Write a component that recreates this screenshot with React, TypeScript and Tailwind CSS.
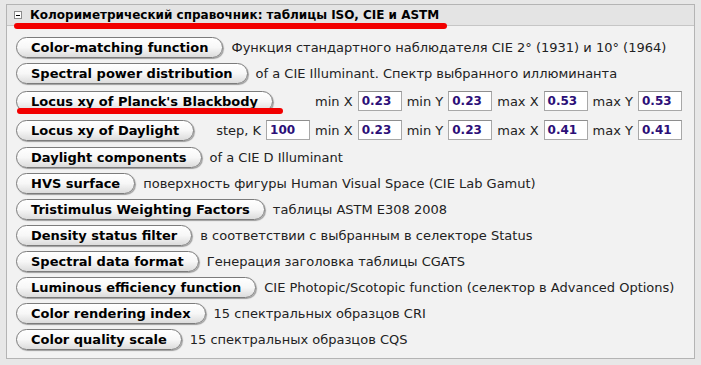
import React from "react";

type Row = {
  label: string;
  desc?: string;
  params?: { label: string; value: string }[];
};

const rows: Row[] = [
  { label: "Color-matching function", desc: "Функция стандартного наблюдателя CIE 2° (1931) и 10° (1964)" },
  { label: "Spectral power distribution", desc: "of a CIE Illuminant. Спектр выбранного иллюминанта" },
  {
    label: "Locus xy of Planck's Blackbody",
    params: [
      { label: "min X", value: "0.23" },
      { label: "min Y", value: "0.23" },
      { label: "max X", value: "0.53" },
      { label: "max Y", value: "0.53" },
    ],
  },
  {
    label: "Locus xy of Daylight",
    params: [
      { label: "step, K", value: "100" },
      { label: "min X", value: "0.23" },
      { label: "min Y", value: "0.23" },
      { label: "max X", value: "0.41" },
      { label: "max Y", value: "0.41" },
    ],
  },
  { label: "Daylight components", desc: "of a CIE D Illuminant" },
  { label: "HVS surface", desc: "поверхность фигуры Human Visual Space (CIE Lab Gamut)" },
  { label: "Tristimulus Weighting Factors", desc: "таблицы ASTM E308 2008" },
  { label: "Density status filter", desc: "в соответствии с выбранным в селекторе Status" },
  { label: "Spectral data format", desc: "Генерация заголовка таблицы CGATS" },
  { label: "Luminous efficiency function", desc: "CIE Photopic/Scotopic function (селектор в Advanced Options)" },
  { label: "Color rendering index", desc: "15 спектральных образцов CRI" },
  { label: "Color quality scale", desc: "15 спектральных образцов CQS" },
];

function Btn({ children }: { children: React.ReactNode }) {
  return (
    <button
      type="button"
      className="h-[21px] shrink-0 rounded-full border border-[#7c7c7c] bg-gradient-to-b from-[#ffffff] via-[#f7f7f7] to-[#dcdcdc] px-[14px] text-[13px] font-bold leading-none text-black shadow-[1px_1px_1px_rgba(0,0,0,0.35)]"
    >
      {children}
    </button>
  );
}

export default function App() {
  return (
    <div className="relative h-[365px] w-[701px] overflow-hidden bg-[#e7e7e7] pl-[6px] pt-[4px] font-['DejaVu_Sans',_Verdana,_sans-serif] text-[#222]">
      <div className="flex w-[689px] flex-col border border-[#b4b4b4] bg-[#f2f2f2]">
        <div className="flex h-[21px] items-center gap-[8px] border-b border-[#c6c6c6] bg-[#e4e4e4] pl-[7px]">
          <span className="flex h-[8px] w-[8px] items-center justify-center border border-[#8c8c8c] bg-white">
            <span className="h-[1px] w-[4px] bg-black" />
          </span>
          <span className="text-[12px] font-bold leading-none text-black">
            Колориметрический справочник: таблицы ISO, CIE и ASTM
          </span>
        </div>
        <div className="flex flex-col gap-[5px] pb-[8px] pl-[9px] pr-[12px] pt-[11px]">
          {rows.map((r) => (
            <div key={r.label} className={`flex items-center ${r.params ? "h-[24px]" : "h-[21px]"}`}>
              <Btn>{r.label}</Btn>
              {r.desc && (
                <span className="ml-[8px] whitespace-nowrap text-[13px] leading-none text-[#222]">{r.desc}</span>
              )}
              {r.params && (
                <div className="ml-auto flex items-center gap-[5px]">
                  {r.params.map((p, i) => (
                    <React.Fragment key={i}>
                      <span className="whitespace-nowrap text-[13px] leading-none text-[#222]">{p.label}</span>
                      <span className="flex h-[20px] w-[44px] items-center border border-[#a8a8a8] border-t-[#8e8e8e] bg-white pl-[3px] text-[12px] font-bold leading-none text-[#2c0f78]">
                        {p.value}
                      </span>
                    </React.Fragment>
                  ))}
                </div>
              )}
            </div>
          ))}
        </div>
      </div>
      <div className="absolute left-[14px] top-[23px] h-[6px] w-[433px] rounded-full bg-[#f20000]" />
      <div className="absolute left-[17px] top-[108px] h-[6px] w-[266px] rounded-full bg-[#f20000]" />
    </div>
  );
}
